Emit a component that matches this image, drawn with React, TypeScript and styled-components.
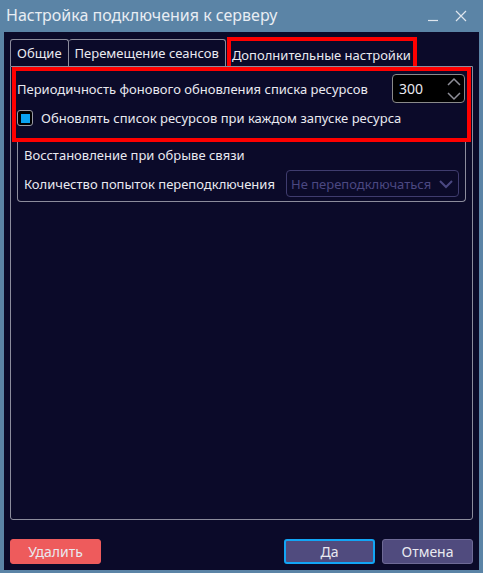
import React from "react";
import styled, { createGlobalStyle } from "styled-components";

const GlobalStyle = createGlobalStyle`
  html, body {
    margin: 0;
    padding: 0;
    background: #5b84a6;
  }
  body {
    font-family: "Noto Sans", "DejaVu Sans", sans-serif;
    font-size: 13px;
    color: #e9e9f0;
  }
`;

const Window = styled.div`
  width: 483px;
  height: 573px;
  display: flex;
  flex-direction: column;
  background: #5b84a6;
`;

const TitleBar = styled.div`
  height: 32px;
  display: flex;
  align-items: center;
  padding: 0 10px 0 6px;
  box-sizing: border-box;
  font-size: 16px;
  color: #e8edf3;
`;

const Title = styled.div`
  flex: 1;
  padding-bottom: 2px;
`;

const TitleButton = styled.div`
  width: 24px;
  display: flex;
  justify-content: center;
  margin-left: 4px;
`;

const Body = styled.div`
  margin: 0 4px 3px;
  flex: 1;
  background: #0b0a29;
  padding: 5px 6px 6px;
  box-sizing: border-box;
  display: flex;
  flex-direction: column;
`;

const TabBar = styled.div`
  display: flex;
  align-items: flex-end;
  height: 29px;
`;

const Tab = styled.div<{ $first?: boolean }>`
  height: 27px;
  box-sizing: border-box;
  border: 1px solid #8c8c9c;
  border-bottom: none;
  border-left: ${(p) => (p.$first ? "1px solid #8c8c9c" : "none")};
  border-radius: 3px 3px 0 0;
  padding: 0 6px;
  display: flex;
  align-items: center;
  white-space: nowrap;
`;

const ActiveTab = styled.div`
  height: 29px;
  margin-left: 1px;
  box-sizing: border-box;
  border: 4px solid #ff0000;
  border-bottom: none;
  padding: 2px 2px 0 1px;
  display: flex;
  align-items: center;
  white-space: nowrap;
`;

const Pane = styled.div`
  flex: 1;
  border: 1px solid #8c8c9c;
  border-radius: 0 0 3px 3px;
  padding: 0 1px;
  display: flex;
  flex-direction: column;
`;

const Highlight = styled.div`
  border: 4px solid #ff0000;
  padding: 3px 2px 11px 1px;
  display: flex;
  flex-direction: column;
  gap: 6px;
`;

const Row = styled.div`
  display: flex;
  align-items: center;
  justify-content: space-between;
`;

const SpinBox = styled.div`
  width: 73px;
  height: 29px;
  box-sizing: border-box;
  border: 1px solid #8a8a8a;
  border-radius: 4px;
  background: #000;
  display: flex;
  align-items: center;
  padding: 0 2px 0 6px;
  font-size: 14px;
`;

const SpinValue = styled.div`
  flex: 1;
`;

const CheckRow = styled.label`
  display: flex;
  align-items: center;
  gap: 8px;
`;

const CheckBox = styled.div`
  width: 16px;
  height: 16px;
  box-sizing: border-box;
  border: 1px solid #9a9aa4;
  border-radius: 3px;
  background: #000;
  display: flex;
  align-items: center;
  justify-content: center;
`;

const CheckMark = styled.div`
  width: 9px;
  height: 9px;
  background: #0aa3f2;
`;

const Group = styled.div`
  margin: 0 5px;
  border: 1px solid #8c8c9c;
  border-top: none;
  border-radius: 0 0 4px 4px;
  padding: 4px 6px 4px;
  display: flex;
  flex-direction: column;
  gap: 6px;
`;

const ComboBox = styled.div`
  width: 173px;
  height: 27px;
  box-sizing: border-box;
  border: 1px solid #3f3c6e;
  border-radius: 4px;
  display: flex;
  align-items: center;
  padding: 0 5px 0 4px;
  color: #4b4882;
  font-size: 13px;
  white-space: nowrap;
`;

const ComboText = styled.div`
  flex: 1;
`;

const Footer = styled.div`
  display: flex;
  gap: 7px;
  margin-top: 19px;
`;

const Spacer = styled.div`
  flex: 1;
`;

const Button = styled.div<{ $variant?: "danger" | "default" }>`
  width: 91px;
  height: 25px;
  box-sizing: border-box;
  border-radius: 3px;
  display: flex;
  align-items: center;
  justify-content: center;
  background: ${(p) => (p.$variant === "danger" ? "#ee5b5c" : "#504b7e")};
  border: ${(p) =>
    p.$variant === "default" ? "2px solid #12a5f5" : "1px solid #6e6a96"};
  ${(p) => p.$variant === "danger" && "border-color: #ee5b5c;"}
  font-size: 14px;
`;

export default function App() {
  return (
    <Window>
      <GlobalStyle />
      <TitleBar>
        <Title>Настройка подключения к серверу</Title>
        <TitleButton>
          <svg width="12" height="12" viewBox="0 0 12 12">
            <path d="M1 10.5 H11" stroke="#dfe6ee" strokeWidth="1.2" />
          </svg>
        </TitleButton>
        <TitleButton>
          <svg width="12" height="12" viewBox="0 0 12 12">
            <path d="M1 1 L11 11 M11 1 L1 11" stroke="#dfe6ee" strokeWidth="1.2" />
          </svg>
        </TitleButton>
      </TitleBar>
      <Body>
        <TabBar>
          <Tab $first>Общие</Tab>
          <Tab>Перемещение сеансов</Tab>
          <ActiveTab>Дополнительные настройки</ActiveTab>
        </TabBar>
        <Pane>
          <Highlight>
            <Row>
              <span>Периодичность фонового обновления списка ресурсов</span>
              <SpinBox>
                <SpinValue>300</SpinValue>
                <svg width="16" height="24" viewBox="0 0 16 24">
                  <path
                    d="M2 8 L8 2 L14 8 M2 16 L8 22 L14 16"
                    fill="none"
                    stroke="#8f8f99"
                    strokeWidth="1.5"
                  />
                </svg>
              </SpinBox>
            </Row>
            <CheckRow>
              <CheckBox>
                <CheckMark />
              </CheckBox>
              <span>Обновлять список ресурсов при каждом запуске ресурса</span>
            </CheckRow>
          </Highlight>
          <Group>
            <span>Восстановление при обрыве связи</span>
            <Row>
              <span>Количество попыток переподключения</span>
              <ComboBox>
                <ComboText>Не переподключаться</ComboText>
                <svg width="14" height="10" viewBox="0 0 14 10">
                  <path
                    d="M1 2 L7 8 L13 2"
                    fill="none"
                    stroke="#4b4882"
                    strokeWidth="2"
                  />
                </svg>
              </ComboBox>
            </Row>
          </Group>
        </Pane>
        <Footer>
          <Button $variant="danger">Удалить</Button>
          <Spacer />
          <Button $variant="default">Да</Button>
          <Button>Отмена</Button>
        </Footer>
      </Body>
    </Window>
  );
}
